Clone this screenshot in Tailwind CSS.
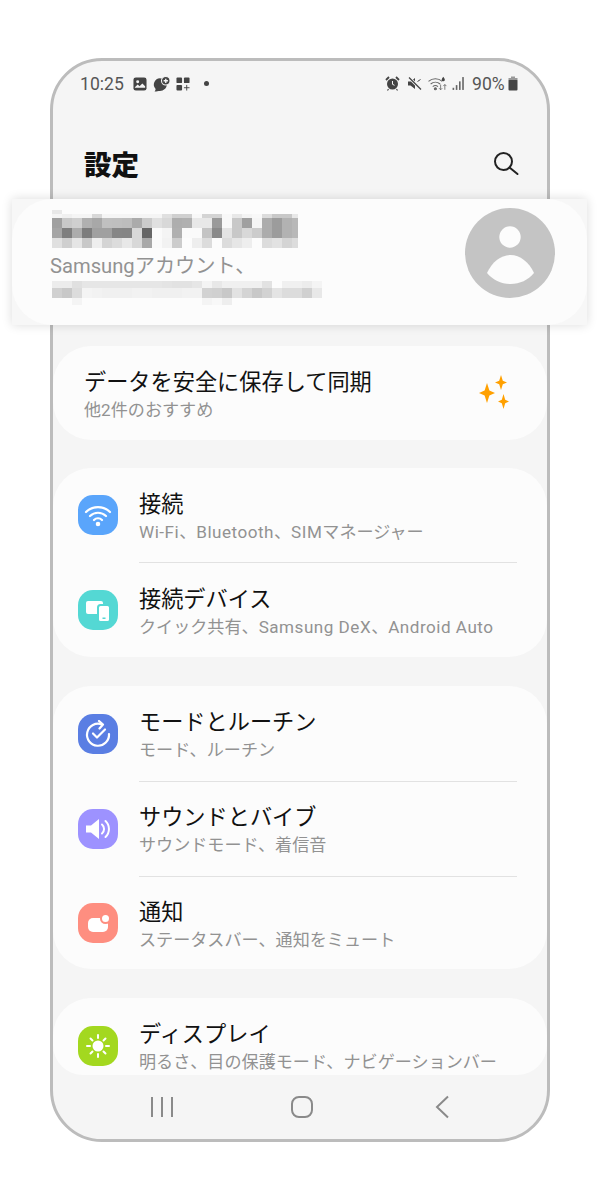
<!DOCTYPE html>
<html lang="ja">
<head>
    <meta charset="UTF-8">
    <title>設定</title>
    <script src="https://cdn.jsdelivr.net/npm/@tailwindcss/browser@4"></script>
</head>
<body class="bg-white font-['Roboto','Noto_Sans_CJK_JP',sans-serif]">
    <div class="relative w-[600px] h-[1200px] overflow-hidden">
        <!-- Phone frame -->
        <div class="absolute left-[50px] top-[58px] w-[500px] h-[1084px] rounded-[52px] border-[3px] border-[#bcbcbc] bg-[#f5f5f5] overflow-hidden flex flex-col">
            <!-- Status bar -->
            <div class="h-[46px] pl-[27px] pr-[29px] flex items-center justify-between text-[#555] text-[17.6px] shrink-0">
                <div class="flex items-center">
                    <span class="w-[45px] whitespace-nowrap">10:25</span>
                    <svg class="ml-[8px] w-[14px] h-[14px]" viewBox="0 0 15 15"><rect x="0.5" y="0.5" width="14" height="14" rx="2.5" fill="#444"/><circle cx="5" cy="5" r="1.6" fill="#f5f5f5"/><path d="M2 11l3-3 2 2 3-3 3 3v1.5H2z" fill="#f5f5f5"/></svg>
                    <svg class="ml-[5px] w-[19px] h-[16px]" viewBox="0 0 17 15"><path d="M7 2a6.5 6 0 0 1 6.5 6c0 3.5-3 6-6.500 6-1.500 0-3 .5-5 .5 1-1 1.200-2 .7-2.700A6 6 0 0 1 7 2z" fill="#444"/><circle cx="12.5" cy="4.5" r="4" fill="#444" stroke="#f5f5f5" stroke-width="1"/><path d="M12.5 2.500v4M10.500 4.500h4" stroke="#f5f5f5" stroke-width="1.300"/></svg>
                    <svg class="ml-[5px] w-[14px] h-[14px]" viewBox="0 0 15 15" fill="#444"><rect x="0.5" y="0.5" width="6" height="6" rx="1"/><rect x="8.5" y="0.5" width="6" height="6" rx="1"/><rect x="0.5" y="8.5" width="6" height="6" rx="1"/><path d="M11.5 8.500v6M8.500 11.500h6" stroke="#444" stroke-width="1" fill="none"/></svg>
                    <span class="ml-[14px] w-[5px] h-[5px] rounded-full bg-[#444]"></span>
                </div>
                <div class="flex items-center">
                    <svg class="w-[15px] h-[15px]" viewBox="0 0 15 15" fill="#444"><circle cx="7.5" cy="8" r="5.5"/><path d="M7.5 5v3.300l2 1" stroke="#f5f5f5" fill="none"/><path d="M1 4l3-3M14 4l-3-3" stroke="#444" stroke-width="1.800"/><path d="M3.500 13l-1 1.500M11.500 13l1 1.500" stroke="#444" stroke-width="1.200"/></svg>
                    <svg class="ml-[7px] w-[15px] h-[15px]" viewBox="0 0 15 15" fill="#444"><path d="M1 5.500h2.500L8 2v11L3.500 9.500H1z"/><path d="M2 1.500l12 12" stroke="#f5f5f5" stroke-width="3"/><path d="M2 1.500l12 12" stroke="#444" stroke-width="1.300"/><path d="M10.500 5.500l3-2" stroke="#444"/></svg>
                    <svg class="ml-[6px] w-[20px] h-[16px]" viewBox="0 0 19 15" fill="none" stroke="#666"><path d="M.5 5a10 10 0 0 1 13 0M2.500 7.500a7 7 0 0 1 9 0M4.500 10a4 4 0 0 1 5 0"/><circle cx="7" cy="12" r="1" fill="#666"/><path d="M14.500 0.500c1 1.500 1.500 2 1.500 3a1.500 1.500 0 0 1-3 0c0-1 .5-1.500 1.500-3z" fill="#444" stroke="none"/><path d="M12 8v5M10.500 11.500l1.500 1.500 1.500-1.500M16 13V8M14.500 9.500L16 8l1.500 1.500" stroke-width=".8"/></svg>
                    <svg class="ml-[4px] w-[14px] h-[15px]" viewBox="0 0 13 14" fill="#666"><rect x="0.5" y="11" width="1.5" height="2"/><rect x="3.5" y="8.5" width="1.5" height="4.5"/><rect x="6.5" y="5" width="1.5" height="8"/><rect x="9.5" y="1" width="1.5" height="12"/></svg>
                    <span class="ml-[6px] w-[33px] whitespace-nowrap">90%</span>
                    <svg class="ml-[3px] w-[10px] h-[15px]" viewBox="0 0 10 15" fill="#444"><rect x="3" y="0.5" width="4" height="2" fill="#999"/><rect x="0.5" y="2" width="9" height="3" fill="#999"/><rect x="0.5" y="4" width="9" height="10.5" rx="1"/></svg>
                </div>
            </div>

            <!-- Header -->
            <div class="h-[93px] pl-[31px] pr-[27px] flex items-end justify-between shrink-0">
                <h1 class="text-[27.5px] leading-[36px] font-black text-[#111] mb-[16px]">設定</h1>
                <svg class="w-[26px] h-[26px] mb-[22px]" viewBox="0 0 26 26" fill="none" stroke="#222" stroke-width="2"><circle cx="9.5" cy="9.5" r="8.5"/><path d="M15.500 15.500l8 6.500" stroke-linecap="round"/></svg>
            </div>

            <!-- Lists -->
            <div class="flex-1 overflow-hidden flex flex-col mt-[146px]">
                <div class="h-[94px] rounded-[38px] bg-[#fcfcfc] pl-[31px] pr-[36px] flex items-center justify-between shrink-0">
                    <div class="pt-[4px]">
                        <div class="text-[22.2px] leading-[30px] text-[#111]">データを安全に保存して同期</div>
                        <div class="text-[17.1px] leading-[26px] text-[#929292]">他2件のおすすめ</div>
                    </div>
                    <svg class="w-[34px] h-[36px]" viewBox="0 0 34 36" fill="#ffa000"><path d="M10 8L12.400 15.600 18 18 12.400 20.400 10 28 7.600 20.400 2 18 7.600 15.600z"/><path d="M24 0L25.800 5.700 30 7.500 25.800 9.300 24 15 22.200 9.300 18 7.500 22.200 5.700z"/><path d="M26.500 19L28.200 24.700 32 26.500 28.200 28.300 26.500 34 24.800 28.300 21 26.500 24.800 24.700z"/></svg>
                </div>

                <div class="mt-[28px] rounded-[38px] bg-[#fcfcfc] shrink-0">
                    <div class="h-[94px] pl-[25px] flex items-center">
                        <div class="w-[40px] h-[40px] rounded-[15px] bg-[#5aa5fb] flex items-center justify-center shrink-0">
                            <svg class="w-[28px] h-[28px]" viewBox="0 0 28 28" fill="none" stroke="#fff" stroke-width="2.200" stroke-linecap="round"><path d="M2 11a17 17 0 0 1 24 0M6 15a11.500 11.500 0 0 1 16 0M10 19a5.500 5.500 0 0 1 8 0"/><circle cx="14" cy="23" r="1.200" fill="#fff"/></svg>
                        </div>
                        <div class="ml-[21px] flex-1 pt-[4px]">
                            <div class="text-[22.2px] leading-[30px] text-[#111]">接続</div>
                            <div class="text-[17.1px] leading-[26px] text-[#929292]"><span class="tracking-[0.5px]">Wi-Fi</span>、<span class="tracking-[0.5px]">Bluetooth</span>、<span class="tracking-[0.5px]">SIM</span>マネージャー</div>
                        </div>
                    </div>
                    <div class="h-px ml-[86px] mr-[30px] bg-[#e2e2e2]"></div>
                    <div class="h-[94px] pl-[25px] flex items-center">
                        <div class="w-[40px] h-[40px] rounded-[15px] bg-[#54d8d4] flex items-center justify-center shrink-0">
                            <svg class="w-[26px] h-[26px]" viewBox="0 0 26 26" fill="#fff"><rect x="1" y="4" width="17" height="13" rx="2"/><rect x="13" y="8" width="12" height="17" rx="2.5" stroke="#54d8d4" stroke-width="2"/><rect x="17.5" y="20.5" width="3" height="1.5" fill="#54d8d4"/></svg>
                        </div>
                        <div class="ml-[21px] flex-1 pt-[4px]">
                            <div class="text-[22.2px] leading-[30px] text-[#111]">接続デバイス</div>
                            <div class="text-[17.1px] leading-[26px] text-[#929292]">クイック共有、<span class="tracking-[0.5px]">Samsung DeX</span>、<span class="tracking-[0.5px]">Android Auto</span></div>
                        </div>
                    </div>
                </div>

                <div class="mt-[29px] rounded-[38px] bg-[#fcfcfc] shrink-0">
                    <div class="h-[95px] pl-[25px] flex items-center">
                        <div class="w-[40px] h-[40px] rounded-[15px] bg-[#5a7ee3] flex items-center justify-center shrink-0">
                            <svg class="w-[28px] h-[28px]" viewBox="0 0 28 28" fill="none" stroke="#fff" stroke-width="2.200" stroke-linecap="round" stroke-linejoin="round"><path d="M18 4.500A11 11 0 1 0 25 14"/><path d="M15 1l4 3.500-3.500 4"/><path d="M9 13.500l4 4 8-8"/></svg>
                        </div>
                        <div class="ml-[21px] flex-1 pt-[2px]">
                            <div class="text-[22.2px] leading-[30px] text-[#111]">モードとルーチン</div>
                            <div class="text-[17.1px] leading-[26px] text-[#929292]">モード、ルーチン</div>
                        </div>
                    </div>
                    <div class="h-px ml-[86px] mr-[30px] bg-[#e2e2e2]"></div>
                    <div class="h-[94px] pl-[25px] flex items-center">
                        <div class="w-[40px] h-[40px] rounded-[15px] bg-[#9d92ff] flex items-center justify-center shrink-0">
                            <svg class="w-[28px] h-[28px]" viewBox="0 0 28 28" fill="none" stroke="#fff" stroke-width="2"><path d="M2 10.500h5l8-6.500v20l-8-6.500H2z" fill="#fff" stroke="none"/><path d="M18 9.500a6 6 0 0 1 0 9M21.500 6a11 11 0 0 1 0 16" stroke-linecap="round"/></svg>
                        </div>
                        <div class="ml-[21px] flex-1 pt-[2px]">
                            <div class="text-[22.2px] leading-[30px] text-[#111]">サウンドとバイブ</div>
                            <div class="text-[17.1px] leading-[26px] text-[#929292]">サウンドモード、着信音</div>
                        </div>
                    </div>
                    <div class="h-px ml-[86px] mr-[30px] bg-[#e2e2e2]"></div>
                    <div class="h-[92px] pl-[25px] flex items-center">
                        <div class="w-[40px] h-[40px] rounded-[15px] bg-[#fe8e80] flex items-center justify-center shrink-0">
                            <svg class="w-[30px] h-[26px]" viewBox="0 0 30 26"><rect x="5" y="8" width="20" height="14" rx="5" fill="#fff"/><circle cx="22.5" cy="8.5" r="5.5" fill="#fe8e80"/><circle cx="22.5" cy="8.5" r="3.5" fill="#fff"/></svg>
                        </div>
                        <div class="ml-[21px] flex-1 pt-[4px]">
                            <div class="text-[22.2px] leading-[30px] text-[#111]">通知</div>
                            <div class="text-[17.1px] leading-[26px] text-[#929292]">ステータスバー、通知をミュート</div>
                        </div>
                    </div>
                </div>

                <div class="mt-[29px] h-[77px] rounded-t-[38px] rounded-b-[30px] bg-[#fcfcfc] pl-[25px] pt-[21px] shrink-0 overflow-hidden flex items-start">
                    <div class="mt-[7px] w-[40px] h-[40px] rounded-[15px] bg-[#a3d81f] flex items-center justify-center shrink-0">
                        <svg class="w-[28px] h-[28px]" viewBox="0 0 28 28" fill="none" stroke="#fff" stroke-width="2" stroke-linecap="round"><circle cx="14" cy="14" r="5.5" fill="#fff" stroke="none"/><path d="M14 3v3M14 22v3M3 14h3M22 14h3M6.500 6.500l2 2M19.500 19.500l2 2M6.500 21.500l2-2M19.500 8.500l2-2"/></svg>
                    </div>
                    <div class="ml-[21px] flex-1">
                        <div class="text-[22.2px] leading-[30px] text-[#111]">ディスプレイ</div>
                        <div class="text-[17.1px] leading-[26px] text-[#929292]">明るさ、目の保護モード、ナビゲーションバー</div>
                    </div>
                </div>
            </div>

            <!-- Nav bar -->
            <div class="h-[64px] shrink-0 flex items-center pl-[97px] gap-[116px]">
                <svg class="w-[24px] h-[24px]" viewBox="0 0 24 24" stroke="#8a8a8a" stroke-width="2"><path d="M2 2v20M12 2v20M22 2v20"/></svg>
                <svg class="w-[24px] h-[24px]" viewBox="0 0 24 24" fill="none" stroke="#8a8a8a" stroke-width="2"><rect x="2" y="2" width="20" height="20" rx="7"/></svg>
                <svg class="w-[24px] h-[24px]" viewBox="0 0 24 24" fill="none" stroke="#8a8a8a" stroke-width="2"><path d="M18 1.500L7 12l11 10.500"/></svg>
            </div>
        </div>

        <!-- Highlighted profile card, sits over the frame -->
        <div class="absolute left-[12px] top-[199px] w-[575px] h-[126px] bg-[#f7f7f7] shadow-[0_0_10px_rgba(0,0,0,0.14)]">
            <div class="w-full h-full rounded-[40px] bg-[#fcfcfc] pl-[38px] pr-[32px] flex justify-between">
                <div class="pt-[11px]">
                    <svg id="name-blur" class="ml-[2px] w-[246px] h-[38px]" viewBox="0 0 246 38" shape-rendering="crispEdges"></svg>
                    <div class="mt-[3px] text-[20.2px] leading-[30px] text-[#929292] whitespace-nowrap">Samsungアカウント、</div>
                    <svg id="mail-blur" class="ml-[2px] w-[270px] h-[24px]" viewBox="0 0 270 24" shape-rendering="crispEdges"></svg>
                </div>
                <svg class="mt-[9px] w-[90px] h-[90px]" viewBox="0 0 90 90"><circle cx="45" cy="45" r="45" fill="#c4c4c4"/><circle cx="45" cy="29" r="10.7" fill="#fcfcfc"/><path d="M22 65C27 54 36 47 45.500 47S64 54 69 65C63 72 55 76 45.500 76S28 72 22 65z" fill="#fcfcfc"/></svg>
            </div>
        </div>
    </div>

    <script>
        // Mosaic over the account name and mail address, grey levels as hex pairs per 10px cell
        function drawMosaic(id, rows) {
            const svg = document.getElementById(id);
            rows.forEach(row => {
                row.cells.split(' ').forEach((v, i) => {
                    const rect = document.createElementNS('http://www.w3.org/2000/svg', 'rect');
                    rect.setAttribute('x', i * 10);
                    rect.setAttribute('y', row.y);
                    rect.setAttribute('width', 10);
                    rect.setAttribute('height', row.h);
                    rect.setAttribute('fill', `#${v}${v}${v}`);
                    svg.appendChild(rect);
                });
            });
        }

        drawMosaic('name-blur', [
            { y: 0, h: 4, cells: 'e8' },
            { y: 4, h: 4, cells: 'f5 f0 f5 f5 d8 f5 f5 f5 f5 f5 f5 e0 d0 d0 f8 d4 d4 f8 e8 f4 f8 dc c8 c8 e8' },
            { y: 8, h: 10, cells: 'a0 c8 cf b0 a8 c0 bf bd ab cb e0 d8 ae b0 e8 e8 9a f8 c8 a0 f5 ac 9c b2 b8' },
            { y: 18, h: 10, cells: 'a5 7e ac 7c a0 a0 86 85 d8 66 fa f4 b0 fa fa c4 8a e4 c8 d8 cc ac 9c b2 b8' },
            { y: 28, h: 10, cells: 'e0 cf e5 c8 ee d4 dc e8 d8 a8 fa f2 cc fc ee dc fc dc e6 ee fc dc e2 d4 dc' }
        ]);
        drawMosaic('mail-blur', [
            { y: 0, h: 7, cells: 'ec ec e0 e6 e6 e6 e6 e6 e6 e6 e6 e4 e2 e2 e6 f4 e8 f0 f0 f0 f0 e2 fc f0 f0 ec f4' },
            { y: 7, h: 10, cells: 'd0 c8 dc f4 f2 f0 f0 f0 f2 f2 f0 f0 f0 f2 f2 d2 d0 c8 e2 d4 c8 d2 e4 dc dc d0 e8' },
            { y: 17, h: 7, cells: 'fc fc f4 fc fc fc fc fc fc fc fc fc fc fc fc f4 f8 ee fc fc fc fc fc fc fc fc fc' }
        ]);
    </script>
</body>
</html>
